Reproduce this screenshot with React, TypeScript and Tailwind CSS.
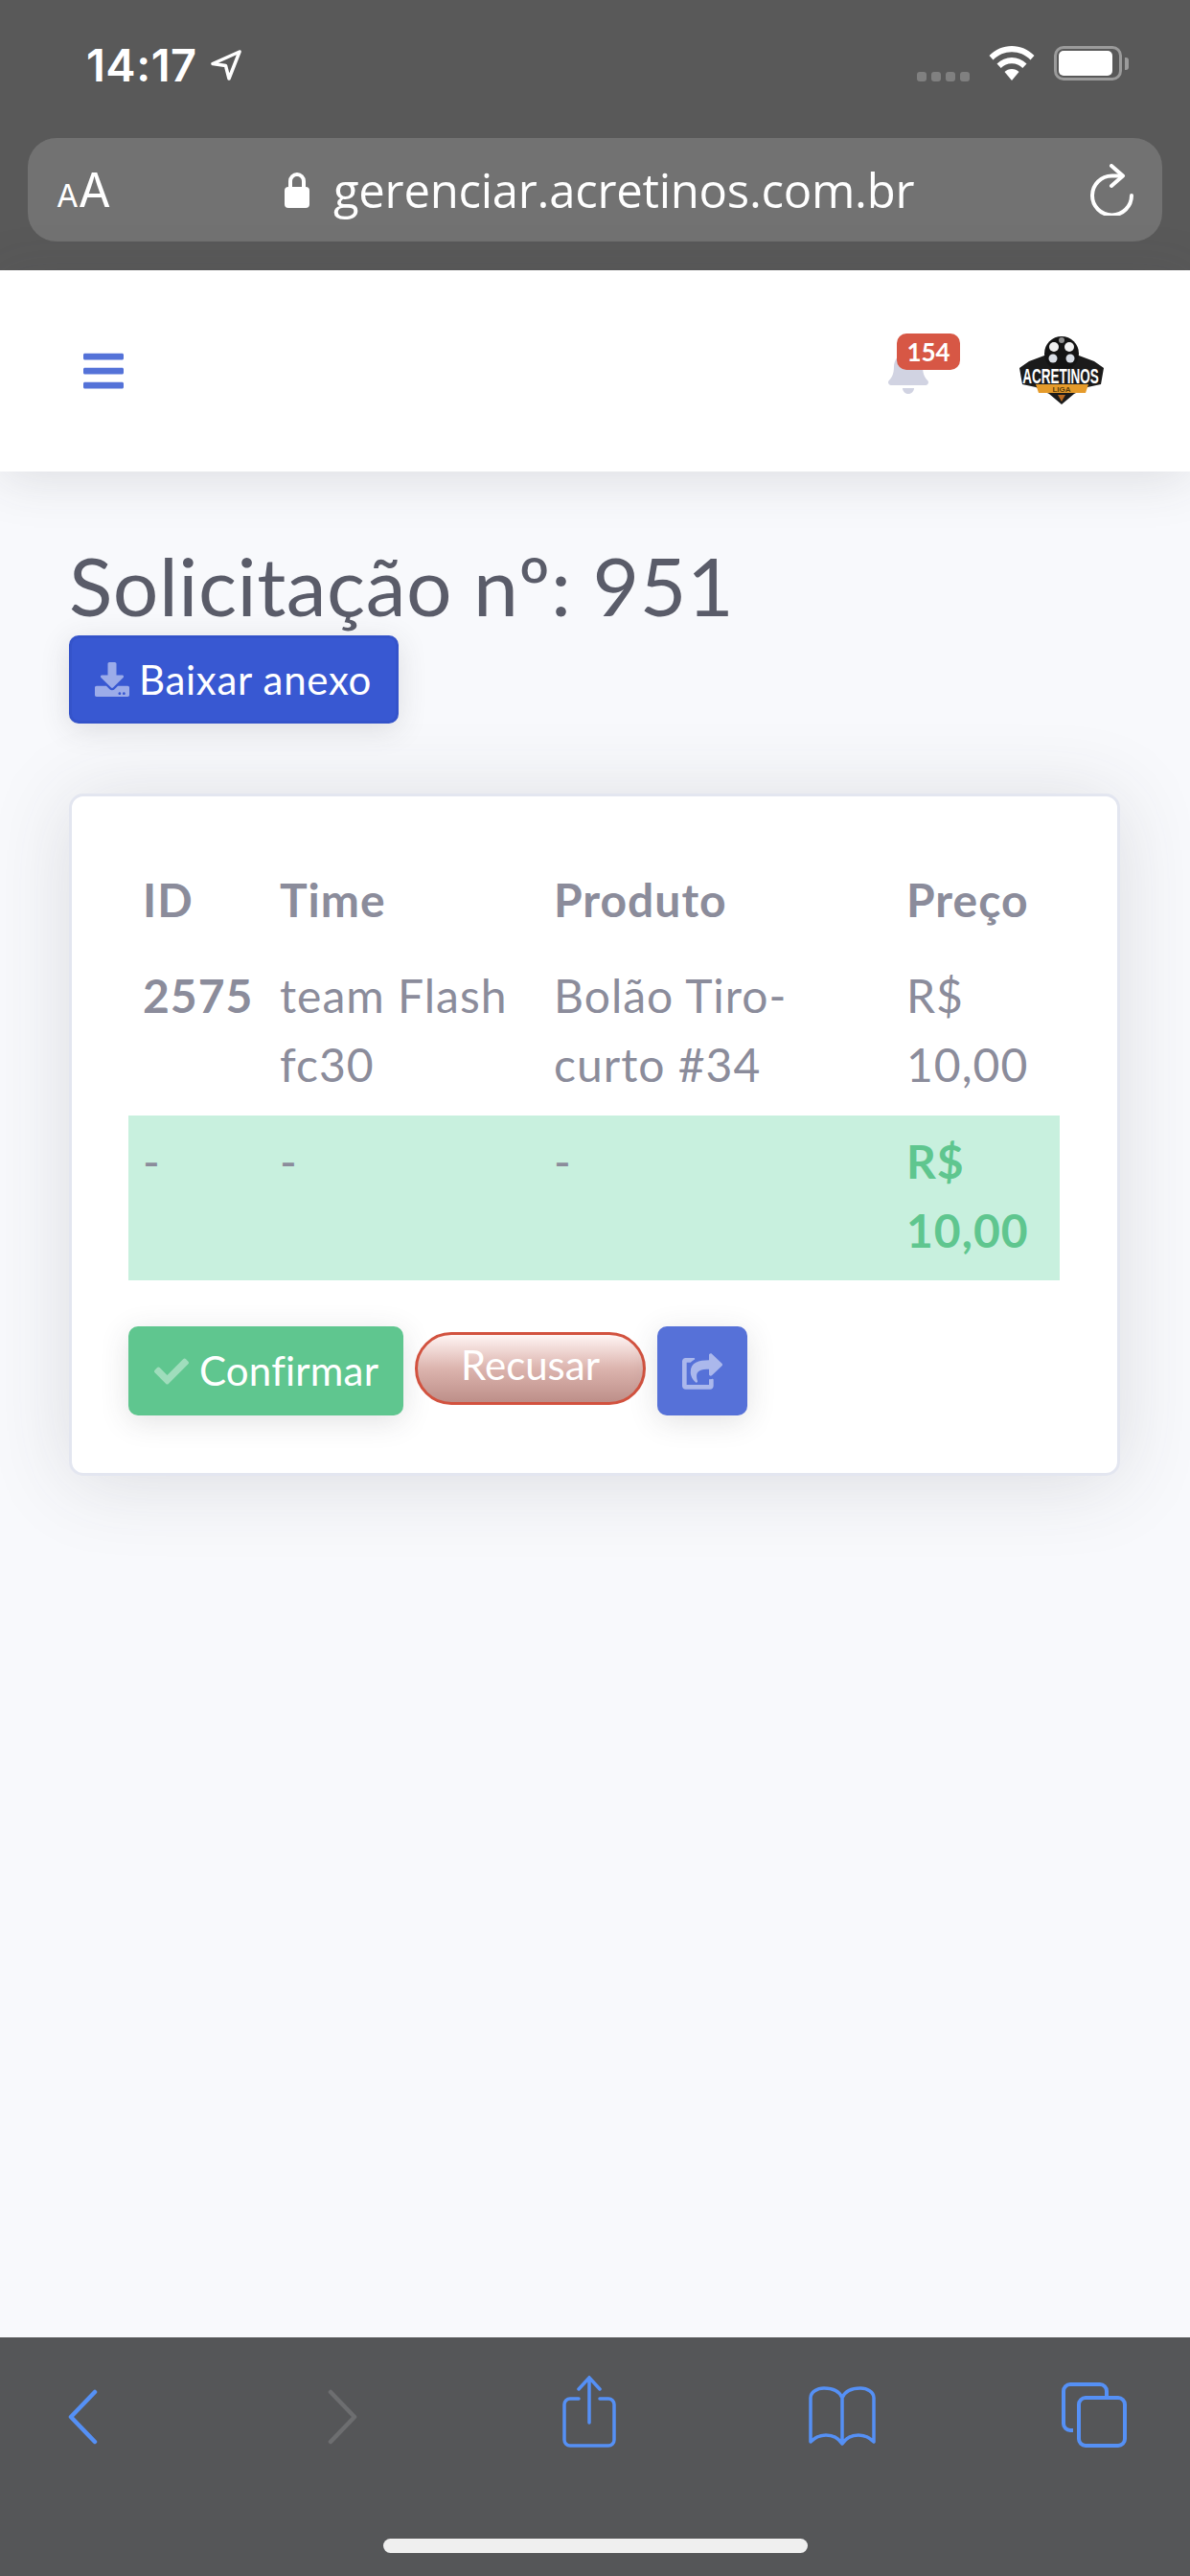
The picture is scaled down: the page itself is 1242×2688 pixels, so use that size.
import React from 'react';
import { FaBars, FaBell, FaCheck, FaDownload, FaShareSquare } from 'react-icons/fa';

function StatusBar() {
  return (
    <div className="flex h-[144px] items-start justify-between pl-[90px] pr-[64px] pt-[48px]">
      <div className="flex items-center gap-[14px]">
        <span className="text-[47px] leading-[40px] font-semibold text-white font-['Inter',sans-serif] tracking-[0.5px]">14:17</span>
        <svg width="32" height="32" viewBox="0 0 32 32" fill="none" stroke="white" strokeWidth="3.500" strokeLinejoin="round">
          <path d="M30 2 2 14.500l13.500 2L19 30z" />
        </svg>
      </div>
      <div className="flex items-start">
        <div className="mr-[20px] mt-[27px] flex gap-[5px]">
          {[0, 1, 2, 3].map((i) => (
            <span key={i} className="h-[10px] w-[10px] rounded-[3px] bg-[#808080]" />
          ))}
        </div>
        <svg width="48" height="36" viewBox="0 0 48 36" fill="white" className="mr-[20px]">
          <path d="M24 0C15 0 7 3.500 0.500 10l4 4.500C10 9 16.500 6.200 24 6.200S38 9 43.500 14.500l4-4.500C41 3.500 33 0 24 0z" />
          <path d="M24 12c-6 0-11 2.300-15.500 6.500l4.200 4.500C15.700 20 19.500 18.300 24 18.300S32.300 20 35.300 23l4.200-4.500C35 14.300 30 12 24 12z" />
          <path d="M24 24c-3 0-5.500 1-7.500 3L24 36l7.500-9c-2-2-4.500-3-7.500-3z" />
        </svg>
        <div className="flex items-center">
          <div className="h-[36px] w-[71px] rounded-[10px] border-[3px] border-[#9b9b9b] pb-[2px] pl-[2px] pr-[7px] pt-[2px]">
            <div className="h-full w-full rounded-[5px] bg-white" />
          </div>
          <div className="ml-[3px] h-[13px] w-[4px] rounded-r-[3px] bg-[#9b9b9b]" />
        </div>
      </div>
    </div>
  );
}

function UrlBar() {
  return (
    <div className="mx-[29px] flex h-[108px] items-center rounded-[30px] bg-[#727272] pl-[30px] pr-[28px] text-white font-['Inter',sans-serif]">
      <div className="flex w-[237px] items-baseline">
        <span className="text-[33px] leading-none">A</span>
        <span className="text-[49px] leading-none">A</span>
      </div>
      <svg width="28" height="39" viewBox="0 0 28 39" fill="none" className="shrink-0">
        <path d="M7 18V10a7 7 0 0 1 14 0v8" stroke="white" strokeWidth="4" />
        <rect x="1" y="16" width="26" height="22" rx="4" fill="white" />
      </svg>
      <span className="ml-[24px] text-[49px] leading-none tracking-[-0.25px] whitespace-nowrap font-['Open_Sans',sans-serif]">gerenciar.acretinos.com.br</span>
      <svg width="48" height="54" viewBox="0 0 48 54" fill="none" stroke="white" strokeWidth="4" strokeLinecap="round" strokeLinejoin="round" className="ml-auto">
        <path d="M44 33A20.500 20.500 0 1 1 23.500 12.500H34" />
        <path d="M23 2l12 10.500L23 23" />
      </svg>
    </div>
  );
}

function Logo() {
  return (
    <svg width="96" height="72" viewBox="0 0 96 72" className="block">
      <path d="M14 26 30 20h36l16 6 10 7-3 17-14 3-14 7-13 11-13-11-14-7-14-3-3-17z" fill="#1b1b1b" />
      <circle cx="48" cy="18" r="18" fill="#141414" />
      <circle cx="40" cy="11" r="5" fill="#f2f2f2" />
      <circle cx="56" cy="11" r="5" fill="#f2f2f2" />
      <circle cx="39" cy="23" r="4.500" fill="#d9dee6" />
      <circle cx="57" cy="23" r="4.500" fill="#d9dee6" />
      <circle cx="48" cy="4" r="3" fill="#8f8f8f" />
      <text transform="translate(47 49) scale(1 1.600)" textAnchor="middle" fontSize="13.500" fontWeight="700" fill="#ffffff" fontFamily="Liberation Sans, sans-serif">ACRETINOS</text>
      <path d="M21 50h55l-3 9H24z" fill="#e59b2b" />
      <text x="48" y="58" textAnchor="middle" fontSize="8" fontWeight="700" fill="#5b3d0c" fontFamily="Liberation Sans, sans-serif">LIGA</text>
      <path d="M44 61h8l-4 7z" fill="#b96a22" />
    </svg>
  );
}

function TopNav() {
  return (
    <header className="relative z-10 flex h-[210px] items-center bg-white pl-[87px] pr-[86px] shadow-[0_6px_52px_rgba(58,59,69,0.15)]">
      <FaBars className="h-[48px] w-[42px] text-[#5472d8]" />
      <div className="relative ml-auto mr-[91px] h-[48px] w-[42px]">
        <FaBell className="h-[48px] w-[42px] text-[#d1d3e2]" />
        <span className="absolute left-[9px] top-[-15px] flex h-[38px] w-[66px] items-center justify-center rounded-[10px] bg-[#d75745] text-[26px] font-bold leading-none text-white">154</span>
      </div>
      <Logo />
    </header>
  );
}

function Card() {
  return (
    <div className="mt-[73px] rounded-[15px] border-[3px] border-[#e3e6f0] bg-white px-[59px] pt-[60px] pb-[60px] shadow-[0_6px_84px_rgba(58,59,69,0.15)]">
      <div className="grid grid-cols-[143px_286px_368px_175px] text-[48px] leading-[72px] tracking-[1px] text-[#8b8c9b]">
        <div className="h-[102px] pl-[15px] pt-[12px] font-bold">ID</div>
        <div className="pl-[15px] pt-[12px] font-bold">Time</div>
        <div className="pl-[15px] pt-[12px] font-bold">Produto</div>
        <div className="pl-[15px] pt-[12px] font-bold">Preço</div>

        <div className="h-[171px] pl-[15px] pt-[10px] font-bold">2575</div>
        <div className="pl-[15px] pt-[10px]">team Flash fc30</div>
        <div className="pl-[15px] pt-[10px]">Bolão Tiro-<br />curto #34</div>
        <div className="pl-[15px] pt-[10px]">R$<br />10,00</div>

        <div className="h-[172px] bg-[#c8f0de] pl-[15px] pt-[12px]">-</div>
        <div className="bg-[#c8f0de] pl-[15px] pt-[12px]">-</div>
        <div className="bg-[#c8f0de] pl-[15px] pt-[12px]">-</div>
        <div className="bg-[#c8f0de] pl-[15px] pt-[12px] font-bold text-[#5fc68f]">R$<br />10,00</div>
      </div>

      <div className="mt-[48px] flex items-start gap-[12px] text-[42px] text-white">
        <button className="flex h-[93px] w-[287px] items-center rounded-[10px] bg-[#5fc68f] pl-[27px] shadow-[0_6px_30px_rgba(58,59,69,0.15)]">
          <FaCheck className="h-[36px] w-[36px] text-white/40" />
          <span className="ml-[11px] tracking-[0.2px]">Confirmar</span>
        </button>
        <button className="mt-[6px] h-[76px] w-[241px] rounded-[38px] border-[3px] border-[#d2523f] bg-gradient-to-b from-[#fff5f4] via-[#dcb4ae] to-[#bd8f89] pb-[9px] text-center">Recusar</button>
        <button className="flex h-[93px] w-[94px] items-center justify-center rounded-[10px] bg-[#5671d8] shadow-[0_6px_30px_rgba(58,59,69,0.15)]">
          <FaShareSquare className="h-[38px] w-[42px] text-white/50" />
        </button>
      </div>
    </div>
  );
}

function SafariToolbar() {
  return (
    <div className="h-[249px] shrink-0 bg-[#555658] pt-[38px]">
      <div className="flex h-[90px] items-center justify-between pl-[70px] pr-[66px]">
        <svg width="34" height="58" viewBox="0 0 34 58" fill="none" stroke="#5590f5" strokeWidth="4.500" strokeLinecap="round" strokeLinejoin="round">
          <path d="M29 3 4 29l25 26" />
        </svg>
        <svg width="34" height="58" viewBox="0 0 34 58" fill="none" stroke="#6d6e70" strokeWidth="4.500" strokeLinecap="round" strokeLinejoin="round" className="ml-[236px]">
          <path d="m5 3 25 26L5 55" />
        </svg>
        <svg width="58" height="76" viewBox="0 0 58 76" fill="none" stroke="#5590f5" strokeWidth="3.500" strokeLinecap="round" className="mb-[10px] ml-[212px]">
          <path d="M18 24H9a6 6 0 0 0-6 6v37a6 6 0 0 0 6 6h40a6 6 0 0 0 6-6V30a6 6 0 0 0-6-6h-9" />
          <path d="M29 49V3M18 14 29 2l11 12" />
        </svg>
        <svg width="72" height="62" viewBox="0 0 72 62" fill="none" stroke="#5590f5" strokeWidth="3.500" strokeLinejoin="round" className="mb-[2px] ml-[199px]">
          <path d="M36 12C33 5 26 2 17 2 10 2 3 6 3 12v46c5-5 10-7 16-7 7 0 13 3 17 9 4-6 10-9 17-9 6 0 11 2 16 7V12c0-6-7-10-14-10-9 0-16 3-19 10zM36 12v48" />
        </svg>
        <svg width="68" height="68" viewBox="0 0 68 68" fill="none" stroke="#5590f5" strokeWidth="4" className="mb-[4px] ml-[193px]">
          <path d="M12 50H9a7 7 0 0 1-7-7V9a7 7 0 0 1 7-7h31a7 7 0 0 1 7 7v7" />
          <rect x="18" y="16" width="48" height="50" rx="7" />
        </svg>
      </div>
      <div className="mx-auto mt-[82px] h-[15px] w-[443px] rounded-full bg-[#efefef]" />
    </div>
  );
}

export default function App() {
  return (
    <div className="flex h-[2688px] flex-col overflow-hidden bg-[#f8f9fc] font-['Lato',sans-serif]">
      <div className="h-[282px] shrink-0 bg-[#595959]">
        <StatusBar />
        <UrlBar />
      </div>
      <TopNav />
      <main className="flex-1 pl-[72px] pr-[73px] pt-[69px]">
        <h3 className="text-[84px] leading-[100px] text-[#5a5c69] tracking-[0.5px]">Solicitação nº: 951</h3>
        <button className="mt-[2px] flex h-[92px] w-[344px] items-center rounded-[10px] border-[3px] border-[#3453ca] bg-[#3858d2] pl-[24px] text-[42px] text-white shadow-[0_6px_30px_rgba(58,59,69,0.15)]">
          <FaDownload className="h-[36px] w-[36px] text-white/50" />
          <span className="ml-[10px] tracking-[0.7px]">Baixar anexo</span>
        </button>
        <Card />
      </main>
      <SafariToolbar />
    </div>
  );
}
